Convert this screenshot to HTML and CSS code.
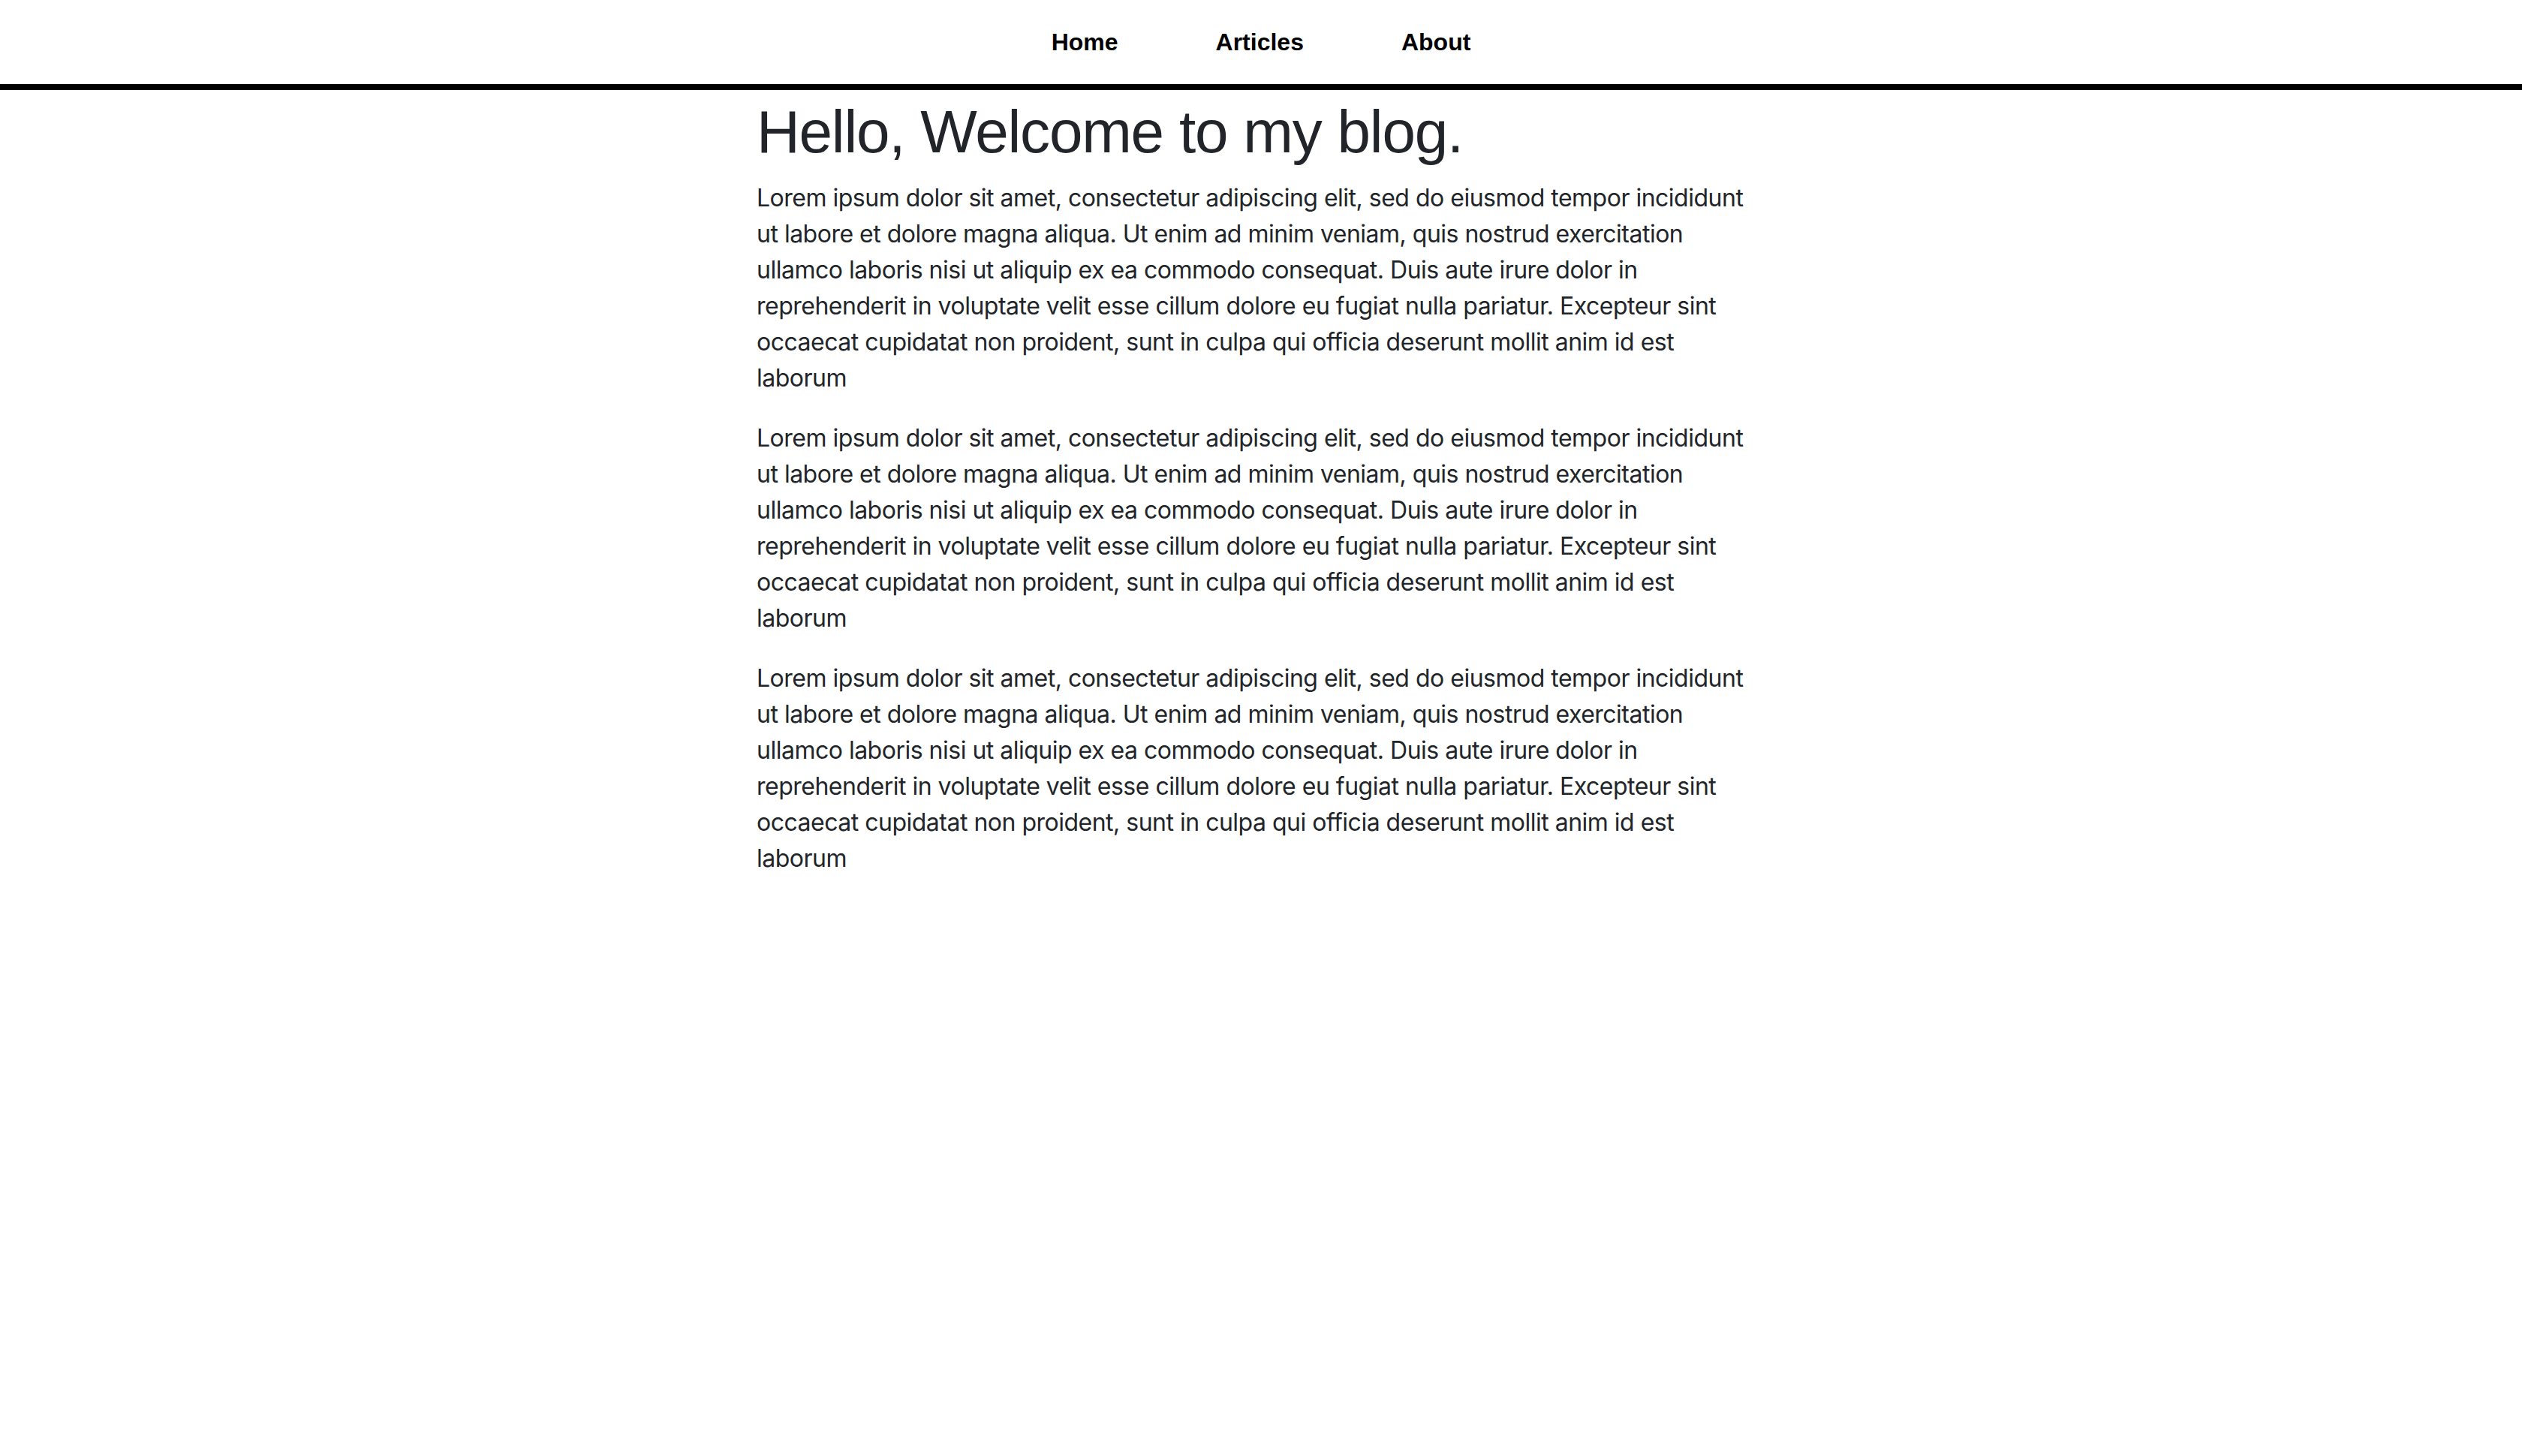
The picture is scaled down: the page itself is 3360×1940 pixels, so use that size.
FILE: index.html
```html
<!DOCTYPE html>
<html lang="en">
<head>
<meta charset="utf-8">
<title>Blog</title>
<link rel="stylesheet" href="styles.css">
</head>
<body>
<header class="site-header">
  <nav class="nav">
    <a class="nav-link" href="#">Home</a>
    <a class="nav-link" href="#">Articles</a>
    <a class="nav-link" href="#">About</a>
  </nav>
</header>
<main class="content">
  <h1 class="title">Hello, Welcome to my blog.</h1>
  <p class="para">Lorem ipsum dolor sit amet, consectetur adipiscing elit, sed do eiusmod tempor incididunt ut labore et dolore magna aliqua. Ut enim ad minim veniam, quis nostrud exercitation ullamco laboris nisi ut aliquip ex ea commodo consequat. Duis aute irure dolor in reprehenderit in voluptate velit esse cillum dolore eu fugiat nulla pariatur. Excepteur sint occaecat cupidatat non proident, sunt in culpa qui officia deserunt mollit anim id est laborum</p>
  <p class="para">Lorem ipsum dolor sit amet, consectetur adipiscing elit, sed do eiusmod tempor incididunt ut labore et dolore magna aliqua. Ut enim ad minim veniam, quis nostrud exercitation ullamco laboris nisi ut aliquip ex ea commodo consequat. Duis aute irure dolor in reprehenderit in voluptate velit esse cillum dolore eu fugiat nulla pariatur. Excepteur sint occaecat cupidatat non proident, sunt in culpa qui officia deserunt mollit anim id est laborum</p>
  <p class="para">Lorem ipsum dolor sit amet, consectetur adipiscing elit, sed do eiusmod tempor incididunt ut labore et dolore magna aliqua. Ut enim ad minim veniam, quis nostrud exercitation ullamco laboris nisi ut aliquip ex ea commodo consequat. Duis aute irure dolor in reprehenderit in voluptate velit esse cillum dolore eu fugiat nulla pariatur. Excepteur sint occaecat cupidatat non proident, sunt in culpa qui officia deserunt mollit anim id est laborum</p>
</main>
</body>
</html>
```

FILE: styles.css
```css
html, body {
  margin: 0;
  padding: 0;
  background: #ffffff;
}

body {
  font-family: Inter, "Noto Sans", "Liberation Sans", sans-serif;
  color: #212529;
  font-size: 32px;
  line-height: 1.5;
}

.site-header {
  border-bottom: 8px solid #000000;
}

.nav {
  height: 112px;
  display: flex;
  justify-content: center;
  align-items: center;
  gap: 130px;
}

.nav-link {
  font-family: "Liberation Sans", Arial, sans-serif;
  color: #000000;
  text-decoration: none;
  font-weight: 700;
  font-size: 32px;
  line-height: 1;
}

.content {
  max-width: 1344px;
  margin: 0 auto;
  padding-top: 8px;
}

.title {
  font-family: "Liberation Sans", Arial, sans-serif;
  margin: 0 0 16px;
  font-size: 80px;
  font-weight: 400;
  line-height: 1.2;
  letter-spacing: -1.2px;
  color: #212529;
}

.para {
  margin: 0 0 32px;
  letter-spacing: -0.5px;
}
```
